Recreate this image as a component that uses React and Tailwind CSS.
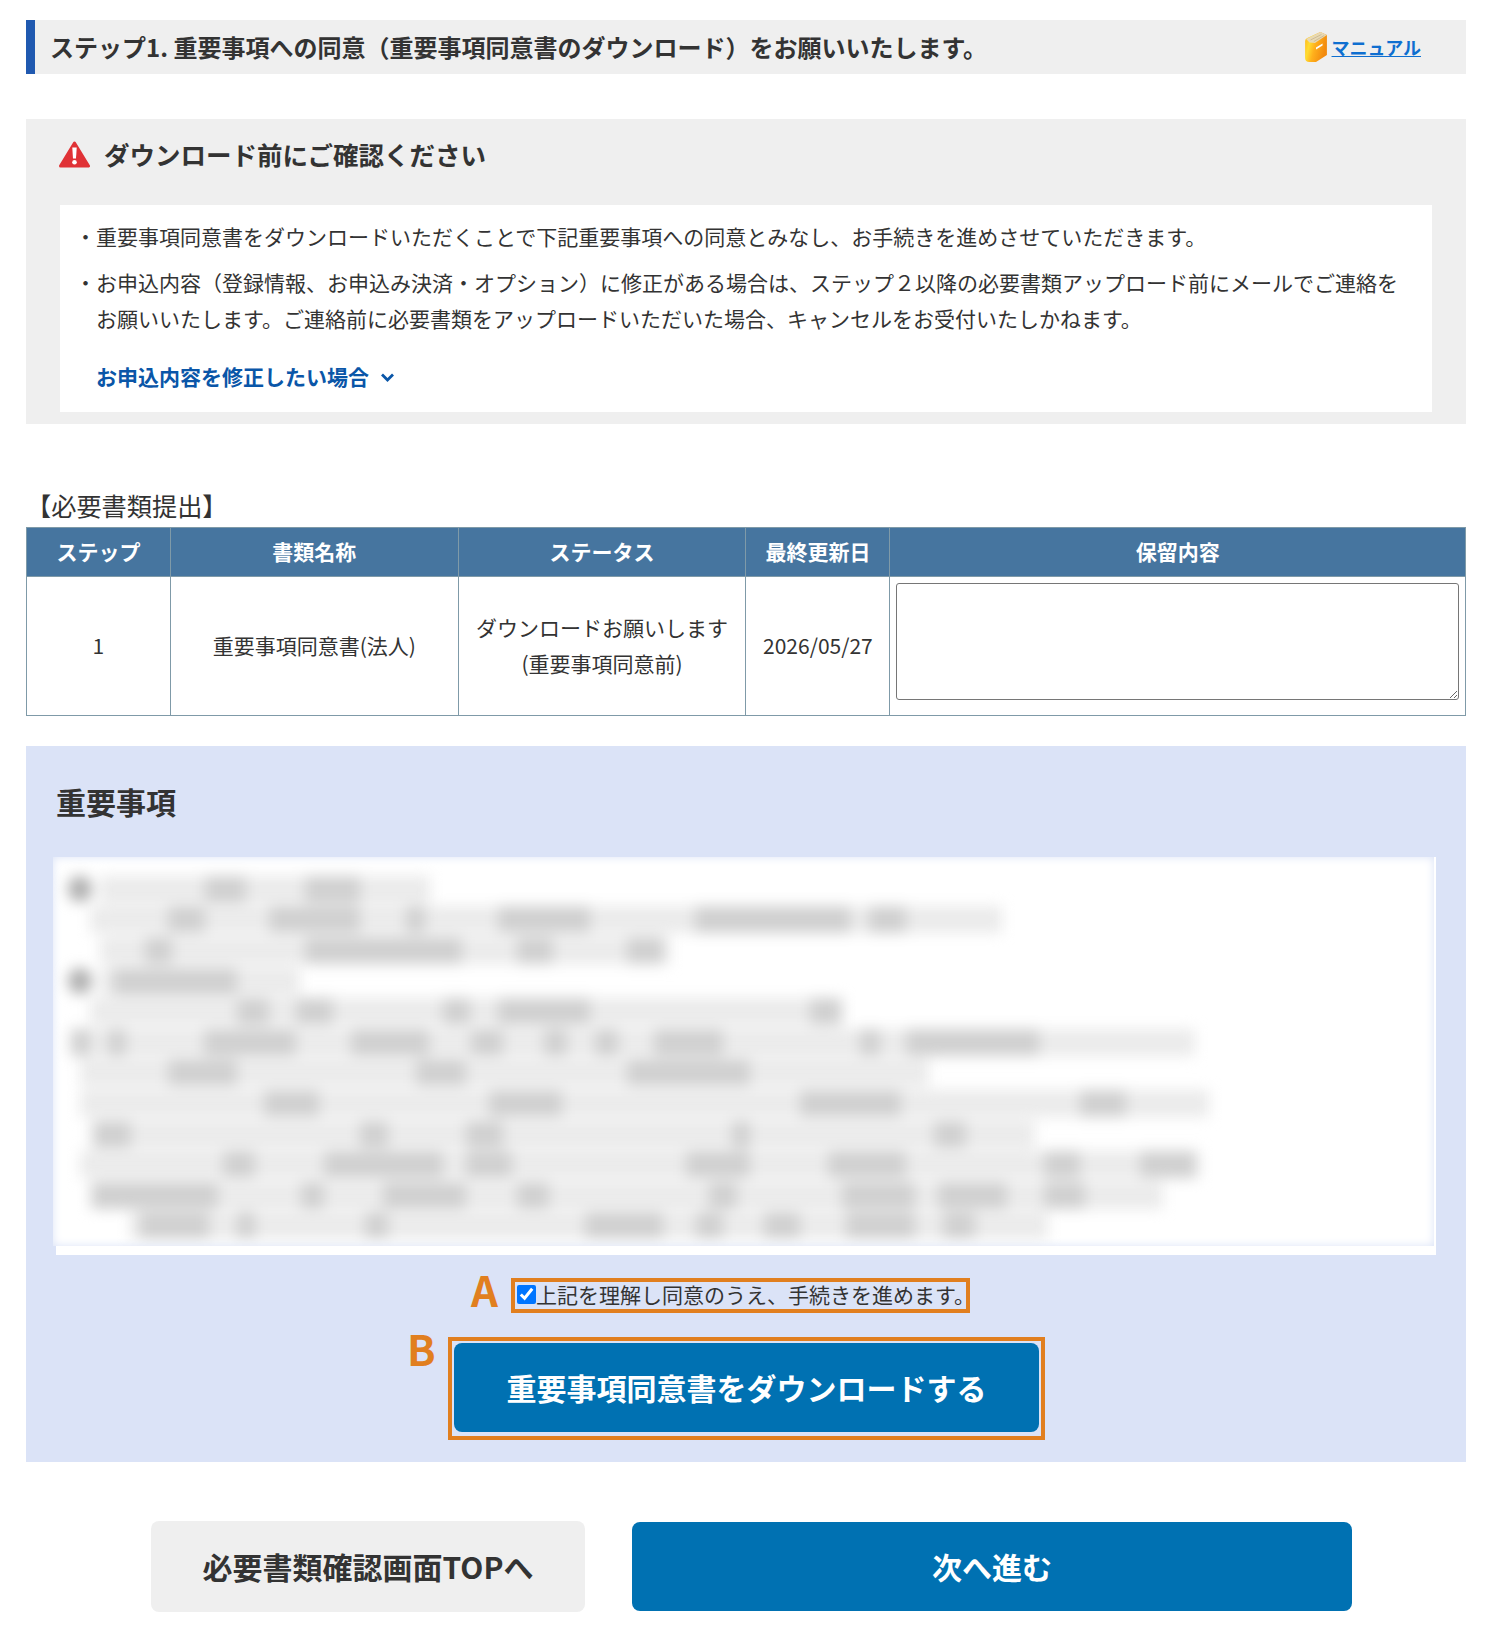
import React from "react";

function WarningIcon() {
  return (
    <svg width="31" height="27" viewBox="0 0 31 27" className="shrink-0 ml-[-1px]">
      <path d="M15.5 2 L29.5 25 L1.5 25 Z" fill="#e03236" stroke="#e03236" strokeWidth="3" strokeLinejoin="round" />
      <path d="M13.3 6.5 h4.4 l-0.7 11 h-3 Z" fill="#fff" />
      <circle cx="15.5" cy="21.2" r="2.3" fill="#fff" />
    </svg>
  );
}

function BookIcon() {
  return (
    <svg width="24" height="32" viewBox="0 0 22 32" preserveAspectRatio="none" className="shrink-0">
      <defs>
        <linearGradient id="bookBody" x1="0" y1="0" x2="1" y2="0.35">
          <stop offset="0" stopColor="#ffb21e" />
          <stop offset="0.3" stopColor="#ffdc30" />
          <stop offset="0.55" stopColor="#ffb01c" />
          <stop offset="1" stopColor="#f28a0e" />
        </linearGradient>
      </defs>
      <path d="M1 10 Q1 8 3 7 L15 1 L21 4 L21 24 L11 31 L5 31 Q1 31 1 27 Z" fill="url(#bookBody)" />
      <path d="M2 8 L15 1 L21 4 L10 12 L5 11.5 Z" fill="#e8d9b4" />
      <path d="M6 9 L16 3.5 M9 10.5 L18.5 4.5" stroke="#c9b68e" strokeWidth="0.8" />
      <path d="M11 16.5 L17 12.5 L17 14.5 L11 18.5 Z" fill="#fff" />
    </svg>
  );
}

const BLUR_LINES = [
  [100, 430, [[205, 246], [305, 360]]],
  [90, 1002, [[168, 205], [269, 360], [406, 425], [498, 590], [695, 850], [869, 906]]],
  [100, 670, [[145, 172], [305, 462], [517, 553], [627, 663]]],
  [100, 300, [[113, 237]]],
  [90, 842, [[237, 269], [296, 333], [443, 470], [498, 590], [810, 842]]],
  [70, 1195, [[71, 90], [108, 126], [204, 296], [351, 429], [471, 503], [544, 567], [595, 618], [654, 723], [860, 880], [906, 1039]]],
  [80, 929, [[168, 237], [416, 466], [627, 750]]],
  [80, 1209, [[264, 319], [489, 562], [800, 901], [1080, 1126]]],
  [90, 1035, [[94, 131], [360, 388], [466, 503], [732, 750], [934, 966]]],
  [80, 1200, [[223, 255], [324, 443], [466, 512], [686, 750], [828, 906], [1044, 1080], [1140, 1195]]],
  [90, 1163, [[92, 218], [301, 324], [383, 466], [517, 549], [709, 737], [842, 915], [938, 1007], [1044, 1085]]],
  [130, 1048, [[140, 209], [237, 255], [365, 388], [585, 663], [696, 723], [764, 800], [846, 915], [943, 975]]],
];

function BlurredLine({ start, end, darks, bullet }) {
  const parts = [];
  let cursor = start;
  darks.forEach(([a, b], i) => {
    if (a > cursor) parts.push(<span key={"l" + i} className="h-full bg-[#ebebeb]" style={{ width: a - cursor }} />);
    parts.push(<span key={"d" + i} className="h-full bg-[#d0d0d0]" style={{ width: b - a }} />);
    cursor = b;
  });
  if (end > cursor) parts.push(<span key="end" className="h-full bg-[#ebebeb]" style={{ width: end - cursor }} />);
  return (
    <div className="flex h-[30.6px] items-center">
      {bullet ? <span className="ml-[15px] mr-[-39px] h-[26px] w-[24px] shrink-0 rounded-full bg-[#b0b0b0]" /> : null}
      <div className="flex h-[27px]" style={{ marginLeft: start - 53 }}>
        {parts}
      </div>
    </div>
  );
}

function BlurredDocument() {
  return (
    <div className="relative ml-[-3px] mt-[2px] h-[389px] w-[1381px] overflow-hidden bg-white">
      <div className="pt-[17px] blur-[7px]" aria-hidden="true">
        {BLUR_LINES.map(([s, e, d], i) => (
          <BlurredLine key={i} start={s} end={e} darks={d} bullet={i === 0 || i === 3} />
        ))}
      </div>
      <div className="absolute inset-0 shadow-[inset_0_0_10px_#dbe3f7]" />
    </div>
  );
}

const headers = ["ステップ", "書類名称", "ステータス", "最終更新日", "保留内容"];

export default function App() {
  return (
    <div className="w-[1500px] min-h-[1647px] bg-white pl-[26px] pr-[34px] pt-[20px] pb-[35px] text-[21px] leading-[36px] text-[#333333] font-['Noto_Sans_CJK_JP','Noto_Sans_CJK_SC',sans-serif]">
      <div className="flex h-[54px] items-center justify-between border-l-[9px] border-[#2059b0] bg-[#efefef] pl-[15px] pr-[45px]">
        <h1 className="pb-[1px] text-[24px] font-bold leading-[50px]">
          ステップ1. 重要事項への同意（重要事項同意書のダウンロード）をお願いいたします。
        </h1>
        <div className="flex items-center gap-[4px]">
          <BookIcon />
          <a href="#" className="text-[18px] font-bold leading-[24px] text-[#0f6fd0] underline">マニュアル</a>
        </div>
      </div>

      <section className="mt-[45px] bg-[#efefef] px-[34px] pb-[12px]">
        <div className="mb-[16px] flex h-[70px] items-center gap-[14px]">
          <WarningIcon />
          <h2 className="text-[25.5px] font-bold">ダウンロード前にご確認ください</h2>
        </div>
        <div className="bg-white pl-[15px] pr-[24px] pt-[13px] pb-[18px]">
          <p className="pl-[21px] -indent-[21px]">・重要事項同意書をダウンロードいただくことで下記重要事項への同意とみなし、お手続きを進めさせていただきます。</p>
          <p className="mt-[10px] pl-[21px] -indent-[21px]">・お申込内容（登録情報、お申込み決済・オプション）に修正がある場合は、ステップ２以降の必要書類アップロード前にメールでご連絡をお願いいたします。ご連絡前に必要書類をアップロードいただいた場合、キャンセルをお受付いたしかねます。</p>
          <a href="#" className="ml-[21px] mt-[22px] flex items-center gap-[11px] font-bold text-[#0a56a8]">
            お申込内容を修正したい場合
            <svg width="15" height="11" viewBox="0 0 15 11" fill="none" className="mt-[2px]">
              <path d="M2 2.5 L7.5 8 L13 2.5" stroke="#0a56a8" strokeWidth="2.8" />
            </svg>
          </a>
        </div>
      </section>

      <h2 className="mt-[63px] h-[40px] text-[25.2px] leading-[36px]">【必要書類提出】</h2>
      <table className="w-full table-fixed border-collapse">
        <thead>
          <tr className="h-[49px] bg-[#46759f] text-white">
            {headers.map((h, i) => (
              <th
                key={h}
                className={
                  "border border-[#7f9aa8] p-0 pb-[3px] text-center font-bold " +
                  (i === 0 || i === 3 ? "w-[10%]" : i === 4 ? "w-[40%]" : "w-[20%]")
                }
              >
                {h}
              </th>
            ))}
          </tr>
        </thead>
        <tbody>
          <tr className="h-[139px] text-center">
            <td className="border border-[#7f9aa8] p-0 pb-[2px]">1</td>
            <td className="border border-[#7f9aa8] p-0 pb-[2px]">重要事項同意書(法人)</td>
            <td className="border border-[#7f9aa8] p-0 pb-[2px]">ダウンロードお願いします<br />(重要事項同意前)</td>
            <td className="border border-[#7f9aa8] p-0 pb-[2px]">2026/05/27</td>
            <td className="border border-[#7f9aa8] pl-[6px] pr-[6px] pt-[6px] pb-0 align-top">
              <textarea className="block h-[117px] w-full rounded-[3px] border border-[#767676] bg-white" />
            </td>
          </tr>
        </tbody>
      </table>

      <section className="mt-[30px] h-[716px] bg-[#dbe3f7] px-[30px] pt-[35px]">
        <h2 className="h-[42px] text-[30px] font-bold leading-[40px]">重要事項</h2>
        <div className="mt-[34px] h-[398px] bg-white">
          <BlurredDocument />
        </div>

        <label className="relative ml-[455px] mt-[23px] flex h-[35px] w-[459px] items-center border-[4px] border-[#e17f1f] pb-[2px] pl-[2px]">
          <input type="checkbox" defaultChecked className="h-[19px] w-[19px] shrink-0" />
          <span className="mb-[2px] whitespace-nowrap">上記を理解し同意のうえ、手続きを進めます。</span>
          <span className="absolute left-[-44px] top-[-18px] text-[42px] font-bold leading-[50px] text-[#e17f1f]">A</span>
        </label>

        <div className="relative ml-[392px] mt-[24px] h-[103px] w-[597px] border-[4px] border-[#e17f1f] p-[2px]">
          <button className="h-[89px] w-[585px] rounded-[8px] bg-[#0071b2] pb-[2px] text-[30px] font-bold text-white">
            重要事項同意書をダウンロードする
          </button>
          <span className="absolute left-[-45px] top-[-18px] text-[42px] font-bold leading-[50px] text-[#e17f1f]">B</span>
        </div>
      </section>

      <div className="ml-[125px] mt-[59px] flex items-center gap-[47px]">
        <button className="h-[91px] w-[434px] rounded-[8px] bg-[#efefef] pb-[2px] text-[30px] font-bold text-[#333333]">必要書類確認画面TOPへ</button>
        <button className="h-[89px] w-[720px] rounded-[8px] bg-[#0071b2] pb-[2px] text-[30px] font-bold text-white">次へ進む</button>
      </div>
    </div>
  );
}
